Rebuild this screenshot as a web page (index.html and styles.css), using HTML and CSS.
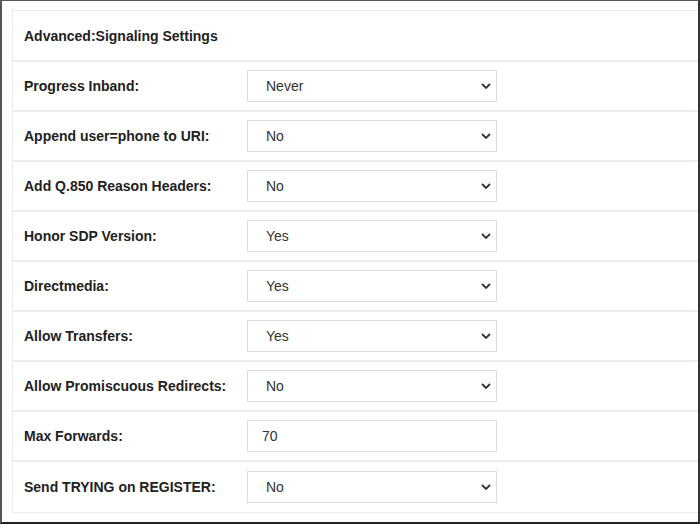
FILE: index.html
```html
<!DOCTYPE html>
<html lang="en">
<head>
  <meta charset="UTF-8">
  <title>Advanced Signaling Settings</title>
  <link rel="stylesheet" href="styles.css">
</head>
<body>
  <div class="frame">
    <div class="panel">
      <div class="row header">Advanced:Signaling Settings</div>

      <div class="row">
        <label class="label">Progress Inband:</label>
        <div class="field">
          <select><option>Never</option><option>Yes</option><option>No</option></select>
          <svg class="chev" width="10" height="6" viewBox="0 0 10 6"><path d="M1 1l4 4 4-4" fill="none" stroke="#333" stroke-width="1.8"/></svg>
        </div>
      </div>

      <div class="row">
        <label class="label">Append user=phone to URI:</label>
        <div class="field">
          <select><option>No</option><option>Yes</option></select>
          <svg class="chev" width="10" height="6" viewBox="0 0 10 6"><path d="M1 1l4 4 4-4" fill="none" stroke="#333" stroke-width="1.8"/></svg>
        </div>
      </div>

      <div class="row">
        <label class="label">Add Q.850 Reason Headers:</label>
        <div class="field">
          <select><option>No</option><option>Yes</option></select>
          <svg class="chev" width="10" height="6" viewBox="0 0 10 6"><path d="M1 1l4 4 4-4" fill="none" stroke="#333" stroke-width="1.8"/></svg>
        </div>
      </div>

      <div class="row">
        <label class="label">Honor SDP Version:</label>
        <div class="field">
          <select><option>Yes</option><option>No</option></select>
          <svg class="chev" width="10" height="6" viewBox="0 0 10 6"><path d="M1 1l4 4 4-4" fill="none" stroke="#333" stroke-width="1.8"/></svg>
        </div>
      </div>

      <div class="row">
        <label class="label">Directmedia:</label>
        <div class="field">
          <select><option>Yes</option><option>No</option></select>
          <svg class="chev" width="10" height="6" viewBox="0 0 10 6"><path d="M1 1l4 4 4-4" fill="none" stroke="#333" stroke-width="1.8"/></svg>
        </div>
      </div>

      <div class="row">
        <label class="label">Allow Transfers:</label>
        <div class="field">
          <select><option>Yes</option><option>No</option></select>
          <svg class="chev" width="10" height="6" viewBox="0 0 10 6"><path d="M1 1l4 4 4-4" fill="none" stroke="#333" stroke-width="1.8"/></svg>
        </div>
      </div>

      <div class="row">
        <label class="label">Allow Promiscuous Redirects:</label>
        <div class="field">
          <select><option>No</option><option>Yes</option></select>
          <svg class="chev" width="10" height="6" viewBox="0 0 10 6"><path d="M1 1l4 4 4-4" fill="none" stroke="#333" stroke-width="1.8"/></svg>
        </div>
      </div>

      <div class="row">
        <label class="label">Max Forwards:</label>
        <div class="field">
          <input type="text" value="70">
        </div>
      </div>

      <div class="row">
        <label class="label">Send TRYING on REGISTER:</label>
        <div class="field">
          <select><option>No</option><option>Yes</option></select>
          <svg class="chev" width="10" height="6" viewBox="0 0 10 6"><path d="M1 1l4 4 4-4" fill="none" stroke="#333" stroke-width="1.8"/></svg>
        </div>
      </div>
    </div>
  </div>
</body>
</html>
```

FILE: styles.css
```css
body {
  margin: 0;
  font-family: "Liberation Sans", Arial, sans-serif;
  font-size: 14px;
  color: #222;
  background: #ffffff;
}
.frame {
  box-sizing: border-box;
  height: 524px;
  border-top: 1px solid #555;
  border-left: 2px solid #555;
  border-right: 2px solid #333;
  border-bottom: 2px solid #222;
  padding: 9px 0 0 10px;
}
.panel {
  border: 1px solid #ececf0;
  border-right: none;
}
.row {
  box-sizing: border-box;
  height: 50px;
  display: flex;
  align-items: center;
  padding: 0 11px;
  border-bottom: 2px solid #ececf2;
}
.row:last-child {
  border-bottom: none;
}
.header {
  height: 51px;
  font-weight: bold;
}
.label {
  width: 223px;
  font-weight: bold;
}
.field {
  position: relative;
}
select,
input {
  box-sizing: border-box;
  width: 250px;
  height: 32px;
  border: 1px solid #dedede;
  border-radius: 0;
  background: #fff;
  font-family: "Liberation Sans", Arial, sans-serif;
  font-size: 14px;
  color: #333;
  outline: none;
}
select {
  appearance: none;
  -webkit-appearance: none;
  padding: 0 0 0 18px;
}
input {
  padding: 0 0 0 14px;
}
.chev {
  position: absolute;
  right: 6px;
  top: 13px;
  pointer-events: none;
}
```
